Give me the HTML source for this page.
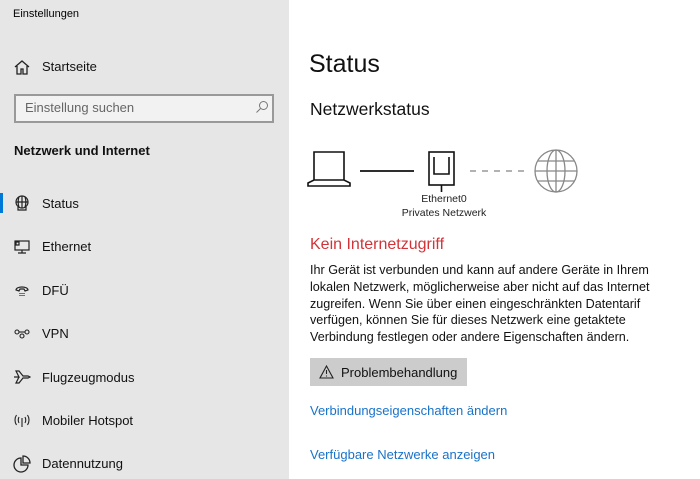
<!DOCTYPE html><html><head><meta charset="utf-8"><style>
body{margin:0;width:700px;height:479px;overflow:hidden;font-family:"Liberation Sans",sans-serif;background:#fff;position:relative;color:#000}
.side{position:absolute;left:0;top:0;width:289px;height:479px;background:#e6e6e6}
.a{position:absolute;white-space:nowrap}
.it{position:absolute;left:42px;font-size:13px;color:#111}
.ic{position:absolute;left:13px;width:18px;height:18px}
.p{position:absolute;left:310px;top:262px;font-size:12.6px;line-height:16.8px;color:#111;width:380px}
.lk{position:absolute;left:310px;font-size:13px;color:#1a73c9}
</style></head><body>
<div class="side">
<div class="a" style="left:13px;top:8px;font-size:11px">Einstellungen</div>
<svg class="ic" style="top:58px" viewBox="0 0 18 18" fill="none" stroke="#222" stroke-width="1.3"><path d="M2 9L9 3l7 6M4 8v8h4v-5h2v5h4V8"/></svg>
<div class="it" style="top:59px">Startseite</div>
<div class="a" style="left:14px;top:94px;width:256px;height:25px;border:2px solid #999;background:#f2f2f2"></div>
<div class="a" style="left:25px;top:100px;font-size:13px;color:#666">Einstellung suchen</div>
<svg class="a" style="left:255px;top:100px" width="14" height="14" viewBox="0 0 14 14" fill="none" stroke="#777" stroke-width="1"><circle cx="8.5" cy="5.5" r="4"/><path d="M5.5 8.5L1.5 12.5"/></svg>
<div class="a" style="left:14px;top:143px;font-size:13px;font-weight:bold;color:#111">Netzwerk und Internet</div>
<div class="a" style="left:0;top:193px;width:3px;height:20px;background:#0078d7"></div>
<svg class="ic" style="top:194px" viewBox="0 0 18 18" fill="none" stroke="#222" stroke-width="1.2"><circle cx="9" cy="8" r="6"/><path d="M3 8h12M9 2v12M6 2.8c-1 3-1 7.4 0 10.4M12 2.8c1 3 1 7.4 0 10.4M5 13v3h8v-3"/></svg>
<div class="it" style="top:196px">Status</div>
<svg class="ic" style="top:238px" viewBox="0 0 18 18" fill="none" stroke="#222" stroke-width="1.2"><rect x="2" y="3" width="14" height="9"/><path d="M9 12v3M5 15h8M3 4h3v3H3z"/></svg>
<div class="it" style="top:239px">Ethernet</div>
<svg class="ic" style="top:282px" viewBox="0 0 18 18" fill="none" stroke="#222" stroke-width="1.2"><path d="M3 8c0-4 12-4 12 0l-3 1-1-2H7L6 9z"/><path d="M7 11v4M9 11v4M11 11v4" stroke-dasharray="1 1"/></svg>
<div class="it" style="top:283px">DFÜ</div>
<svg class="ic" style="top:325px" viewBox="0 0 18 18" fill="none" stroke="#222" stroke-width="1.1"><circle cx="4" cy="7" r="2"/><circle cx="14" cy="7" r="2"/><circle cx="9" cy="11" r="2"/><path d="M6 7h6"/></svg>
<div class="it" style="top:326px">VPN</div>
<svg class="ic" style="top:368px" viewBox="0 0 18 18" fill="none" stroke="#222" stroke-width="1.2"><path d="M1 9h5L3 3h3l4 5h5l2 1-2 1h-5l-4 5H3l3-6"/></svg>
<div class="it" style="top:370px">Flugzeugmodus</div>
<svg class="ic" style="top:412px" viewBox="0 0 18 18" fill="none" stroke="#222" stroke-width="1.1"><path d="M9 6v9M6 5c-1 2-1 4 0 6M12 5c1 2 1 4 0 6M3.5 3c-2 3-2 7 0 10M14.5 3c2 3 2 7 0 10"/></svg>
<div class="it" style="top:413px">Mobiler Hotspot</div>
<svg class="ic" style="top:455px" viewBox="0 0 18 18" fill="none" stroke="#222" stroke-width="1.3"><path d="M8 3a7 7 0 1 0 7 7H8z"/><path d="M10 1v7h7a7 7 0 0 0-7-7z"/></svg>
<div class="it" style="top:456px">Datennutzung</div>
</div>
<div class="a" style="left:309px;top:50px;font-size:25px;color:#111">Status</div>
<div class="a" style="left:310px;top:99px;font-size:17.5px;color:#111">Netzwerkstatus</div>
<svg class="a" style="left:300px;top:140px" width="290" height="60" viewBox="0 0 290 60" fill="none" stroke="#111" stroke-width="1.6">
<path d="M14 12h30v28H14zM8 43l6-3h30l6 3v3H8z"/>
<path d="M60 31h54" stroke-width="1.8"/>
<rect x="129" y="12" width="25" height="33"/><path d="M134 17v17h15V17M141.5 45v7"/>
<path d="M170 31h58" stroke="#999" stroke-dasharray="6 6"/>
<g stroke="#888" stroke-width="1.3"><circle cx="256" cy="31" r="21"/><ellipse cx="256" cy="31" rx="9" ry="21"/><path d="M235 31h42M256 10v42M238 21h36M238 41h36"/></g>
</svg>
<div class="a" style="left:380px;top:193px;width:128px;text-align:center;font-size:10.5px;line-height:13.5px;color:#222">Ethernet0<br>Privates Netzwerk</div>
<div class="a" style="left:310px;top:236px;font-size:16px;color:#d13438">Kein Internetzugriff</div>
<div class="p">Ihr Gerät ist verbunden und kann auf andere Geräte in Ihrem<br>lokalen Netzwerk, möglicherweise aber nicht auf das Internet<br>zugreifen. Wenn Sie über einen eingeschränkten Datentarif<br>verfügen, können Sie für dieses Netzwerk eine getaktete<br>Verbindung festlegen oder andere Eigenschaften ändern.</div>
<div class="a" style="left:310px;top:358px;width:157px;height:28px;background:#cccccc"></div>
<svg class="a" style="left:319px;top:365px" width="15" height="14" viewBox="0 0 15 14" fill="none" stroke="#222" stroke-width="1.1"><path d="M7.5 1L14 13H1z"/><path d="M7.5 5v4M7.5 10.5v1"/></svg>
<div class="a" style="left:341px;top:365px;font-size:13px;color:#111">Problembehandlung</div>
<div class="lk" style="top:403px">Verbindungseigenschaften ändern</div>
<div class="lk" style="top:447px">Verfügbare Netzwerke anzeigen</div>
</body></html>
